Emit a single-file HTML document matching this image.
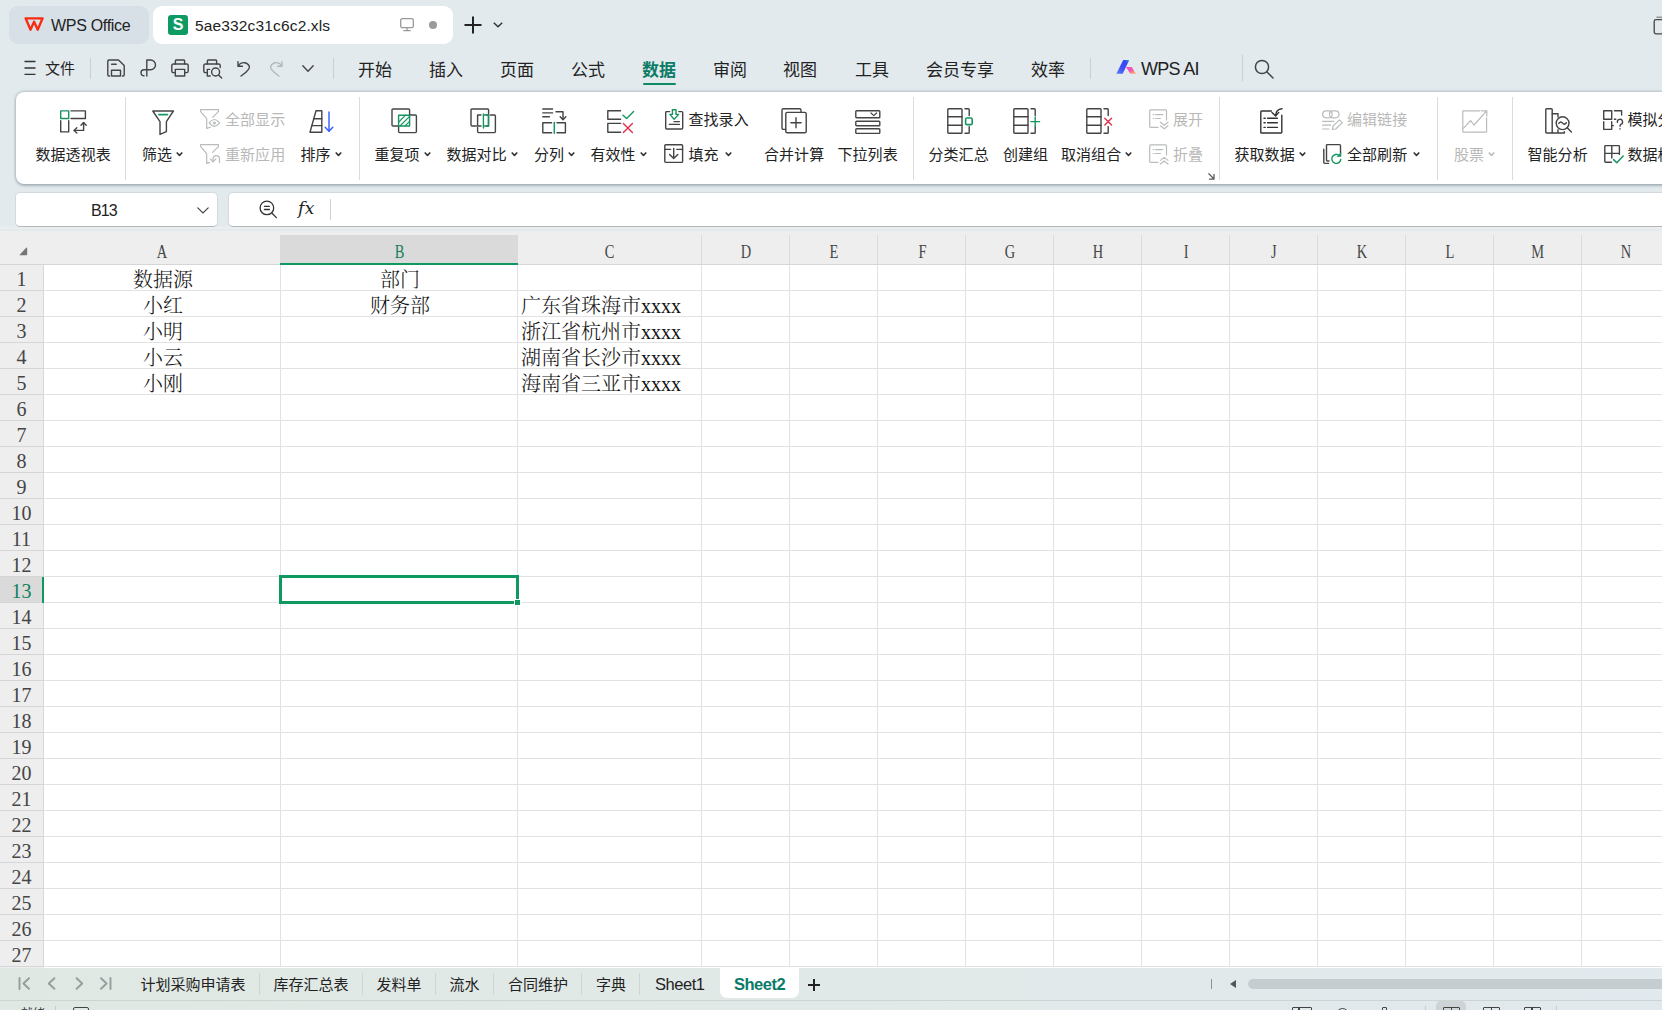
<!DOCTYPE html>
<html lang="zh-CN"><head><meta charset="utf-8"><title>5ae332c31c6c2.xls - WPS Office</title>
<style>
*{box-sizing:border-box;margin:0;padding:0}
html,body{width:1662px;height:1010px;overflow:hidden}
body{position:relative;background:#e3eaee;font-family:"Liberation Sans","Noto Sans CJK SC",sans-serif;color:#222;}
.abs{position:absolute}
.t{position:absolute;white-space:nowrap;line-height:1}
svg{position:absolute;overflow:visible}
.ic{fill:none;stroke:#444;stroke-width:1.4;stroke-linecap:round;stroke-linejoin:round}
.menu{font-size:17px;color:#222;top:61.5px;height:18px;line-height:18px}
.rl{font-size:15px;color:#222;letter-spacing:0.05px;line-height:16px;height:16px}
.dis{color:#b8b8b8}
.vsep{position:absolute;width:1px;background:#d9dcde}
.gl{position:absolute;background:#e2e2e2}
.hl{position:absolute;background:#d6d6d6}
.ch{position:absolute;top:242px;padding-left:2px;height:20px;line-height:20px;font-family:"Liberation Serif","Noto Serif CJK SC",serif;font-size:19.5px;color:#464646;text-align:center}
.ch span{display:inline-block;transform:scaleX(.74)}
.rh{position:absolute;left:0;width:43px;text-align:center;font-family:"Liberation Serif","Noto Serif CJK SC",serif;font-size:20px;color:#454545;height:26px;line-height:26px;padding-top:1px}
.cell{position:absolute;font-family:"Liberation Serif","Noto Serif CJK SC",serif;font-size:20px;font-weight:300;color:#111;height:26px;line-height:26px;white-space:nowrap}
.st{position:absolute;top:976px;height:18px;line-height:18px;font-size:15px;color:#222;white-space:nowrap}
</style></head>
<body>
<!-- title bar -->
<div class="abs" style="left:9px;top:6px;width:140px;height:38px;border-radius:9px;background:#d7e0e6"></div>
<svg style="left:24px;top:16px" width="21" height="17" viewBox="0 0 21 17"><path d="M1.600 2.300H18.600L13.700 13.800L10.100 5.600L6.500 13.800Z" fill="none" stroke="#fa2a10" stroke-width="2.300" stroke-linejoin="round"/></svg>
<div class="t" style="left:51px;top:16.5px;font-size:16px;line-height:17px;color:#222;letter-spacing:-0.3px">WPS Office</div>
<div class="abs" style="left:153px;top:6px;width:300px;height:38px;border-radius:9px;background:#fff"></div>
<div class="abs" style="left:168px;top:15px;width:20px;height:20px;border-radius:3px;background:#0e9b63"></div>
<div class="t" style="left:168px;top:16px;width:20px;text-align:center;font-size:16px;font-weight:bold;color:#fff;line-height:18px">S</div>
<div class="t" style="left:195px;top:17px;font-size:15.5px;line-height:17px;color:#222;letter-spacing:0.15px">5ae332c31c6c2.xls</div>
<svg style="left:400px;top:18px" width="14" height="14" viewBox="0 0 14 14"><rect x="0.7" y="0.7" width="12.6" height="9" rx="1.6" fill="none" stroke="#999" stroke-width="1.3"/><path d="M7 9.8V12.4M3.4 12.6H10.6" stroke="#999" stroke-width="1.3" fill="none"/></svg>
<div class="abs" style="left:429px;top:21px;width:8px;height:8px;border-radius:4px;background:#9a9a9a"></div>
<svg style="left:464px;top:16px" width="18" height="18" viewBox="0 0 18 18"><path d="M9 0.5V17.5M0.5 9H17.5" stroke="#222" stroke-width="2" fill="none"/></svg>
<svg style="left:493px;top:22px" width="10" height="6" viewBox="0 0 10 6"><path d="M0.8 0.8L5 4.8L9.2 0.8" stroke="#333" stroke-width="1.5" fill="none"/></svg>
<svg style="left:1652.500px;top:15.500px" width="14" height="20" viewBox="0 0 14 20"><path d="M3.400 1.200H14" stroke="#777" stroke-width="1.100" fill="none"/><path d="M14 3.700H3A1.800 1.800 0 0 0 1.200 5.500V16A1.800 1.800 0 0 0 3 17.800H14" stroke="#444" stroke-width="1.300" fill="none"/></svg>
<!-- menu row -->
<svg style="left:24px;top:60px" width="12" height="16" viewBox="0 0 12 16"><path d="M0.5 1.5H11.5M0.5 8H11.5M0.5 14.3H11.5" stroke="#333" stroke-width="1.3" fill="none"/></svg>
<div class="t" style="left:45px;top:60px;font-size:15px;line-height:17px;color:#222">文件</div>
<div class="vsep" style="left:90px;top:58px;height:21px;background:#c9cfd3"></div>
<svg style="left:107px;top:59px" width="18" height="18" viewBox="0 0 18 18"><g class="ic"><path d="M2.6 17H2A1.3 1.3 0 0 1 .8 15.7V2.3A1.3 1.3 0 0 1 2 1H11.5L17.2 6.6V15.7A1.3 1.3 0 0 1 16 17H15.4"/><path d="M4.5 17V11.2H13.5V17Z"/><path d="M4.6 5.3H9.2"/></g></svg>
<svg style="left:140px;top:59px" width="17" height="18" viewBox="0 0 17 18"><g class="ic"><path d="M6.8 17V1H10.6A4.9 4.9 0 0 1 10.6 10.8H4A3 3 0 0 0 1 13.8A3 3 0 0 0 4 16.800"/></g></svg>
<svg style="left:171px;top:59px" width="18" height="18" viewBox="0 0 18 18"><g class="ic"><path d="M4.4 5V1.8A.8.8 0 0 1 5.2 1H12.8A.8.8 0 0 1 13.6 1.8V5"/><path d="M4.2 13.6H2.4A1.6 1.6 0 0 1 .8 12V6.6A1.6 1.6 0 0 1 2.4 5H15.6A1.6 1.6 0 0 1 17.2 6.6V12A1.6 1.6 0 0 1 15.6 13.6H13.8"/><path d="M4.3 10.4H13.7V17H4.3Z"/></g></svg>
<svg style="left:203px;top:59px" width="20" height="20" viewBox="0 0 20 20"><g class="ic"><path d="M4.4 5V1.8A.8.8 0 0 1 5.2 1H12.8A.8.8 0 0 1 13.6 1.8V5"/><path d="M3.6 13.6H2.4A1.6 1.6 0 0 1 .8 12V6.6A1.6 1.6 0 0 1 2.4 5H15.6A1.6 1.6 0 0 1 17.2 6.6V8.6"/><path d="M6.6 10.4H4.3V17H7.2"/><circle cx="12.6" cy="13" r="4"/><path d="M15.6 16L18.6 19"/></g></svg>
<svg style="left:237px;top:60px" width="14" height="17" viewBox="0 0 14 17"><g class="ic"><path d="M1 1.6V6.2H5.4"/><path d="M1.4 6A6 6 0 0 1 12.4 6.6C13 10 8 13 4 16"/></g></svg>
<svg style="left:269px;top:60px" width="14" height="17" viewBox="0 0 14 17"><g class="ic" style="stroke:#b4b8bb"><path d="M13 1.6V6.2H8.6"/><path d="M12.6 6A6 6 0 0 0 1.6 6.6C1 10 6 13 10 16"/></g></svg>
<svg style="left:302px;top:65px" width="12" height="8" viewBox="0 0 12 8"><path d="M0.8 0.8L6 6.2L11.2 0.8" class="ic"/></svg>
<div class="vsep" style="left:333px;top:58px;height:21px;background:#c9cfd3"></div>
<div class="t menu" style="left:358px">开始</div>
<div class="t menu" style="left:429px">插入</div>
<div class="t menu" style="left:500px">页面</div>
<div class="t menu" style="left:571px">公式</div>
<div class="t menu" style="left:642px;color:#0c7c66;font-weight:bold">数据</div>
<div class="abs" style="left:643px;top:82.5px;width:33px;height:2px;background:#0f8a62;border-radius:1px"></div>
<div class="t menu" style="left:713px">审阅</div>
<div class="t menu" style="left:783px">视图</div>
<div class="t menu" style="left:855px">工具</div>
<div class="t menu" style="left:926px">会员专享</div>
<div class="t menu" style="left:1031px">效率</div>
<div class="vsep" style="left:1090px;top:58px;height:21px;background:#c9cfd3"></div>
<svg style="left:1116px;top:60px" width="20" height="14" viewBox="0 0 20 14"><defs><linearGradient id="ai1" x1="0" y1="1" x2="1" y2="0"><stop offset="0" stop-color="#5a86f8"/><stop offset="0.45" stop-color="#3d4cf4"/><stop offset="0.8" stop-color="#3a48f2"/><stop offset="1" stop-color="#1fa6c8"/></linearGradient><linearGradient id="ai2" x1="0" y1="0" x2="0.6" y2="1"><stop offset="0" stop-color="#f04cc4"/><stop offset="0.6" stop-color="#f458b8"/><stop offset="1" stop-color="#ffa066"/></linearGradient></defs><path d="M7.200 0H12.600Q13.200 0.100 12.900 0.800L6.700 13.800H0.300Z" fill="url(#ai1)"/><path d="M10 6.900H15.800L19.800 13.800H14.200Z" fill="url(#ai2)"/></svg>
<div class="t menu" style="left:1141px;top:60px;font-size:18px;letter-spacing:-0.700px">WPS AI</div>
<div class="vsep" style="left:1242px;top:55px;height:26px;background:#c9cfd3"></div>
<svg style="left:1254px;top:59px" width="20" height="20" viewBox="0 0 20 20"><g class="ic" style="stroke-width:1.5"><circle cx="8" cy="8" r="6.6"/><path d="M13 13L19 19"/></g></svg>
<!-- ribbon -->
<div class="abs" style="left:15.5px;top:91.5px;width:1700px;height:92.5px;border-radius:8px;background:#fff;box-shadow:0 0 3px rgba(80,100,110,.5),0 1.5px 3px rgba(80,100,110,.3)"></div>
<div class="vsep" style="left:125px;top:97px;height:83px"></div>
<div class="vsep" style="left:359px;top:97px;height:83px"></div>
<div class="vsep" style="left:913px;top:97px;height:83px"></div>
<div class="vsep" style="left:1219px;top:97px;height:83px"></div>
<div class="vsep" style="left:1437px;top:97px;height:83px"></div>
<div class="vsep" style="left:1512px;top:97px;height:83px"></div>
<svg style="left:60px;top:109.5px" width="28" height="24" viewBox="0 0 28 24"><g class="ic" style=""><rect x="0.7" y="0.9" width="8" height="7.6" stroke="#17955f"/><path d="M11 0.9H25.4V8.5H11"/><path d="M0.7 10.8V21.9H8.7V10.8"/><path d="M23.6 13V20.4H14.4"/><path d="M21 15.2L23.6 12.4L26.2 15.2"/><path d="M16.8 17.8L14 20.4L16.8 23"/></g></svg>
<div class="t rl " style="left:35.5px;top:147px">数据透视表</div>
<svg style="left:152px;top:109.5px" width="23" height="26" viewBox="0 0 23 26"><g class="ic" style=""><path d="M0.8 1H21.4L14.4 11.6V21.6L8 24.4V11.6Z"/><path d="M6.8 4.6H15.6" stroke="#17955f" stroke-width="1.6"/></g></svg>
<div class="t rl " style="left:142px;top:147px">筛选</div>
<svg style="left:176px;top:152.4px" width="7" height="5" viewBox="0 0 7 5"><path d="M1.200 1L3.500 3.300L5.800 1" fill="none" stroke="#333" stroke-width="1.650" stroke-linecap="round" stroke-linejoin="round"/></svg>
<svg style="left:200px;top:108.8px" width="21" height="21" viewBox="0 0 21 21"><g class="ic" style="stroke:#b9bcbc;stroke-width:1.200"><path d="M0.600 2.600V0.600H18.400V2.600M0.600 2.600L6.700 9.600V19.400L10.400 18.200M18.400 2.600L12.600 8.400"/><path d="M9.200 13.900Q14.400 7.100 19.600 13.900Q14.400 20.700 9.200 13.900Z"/><circle cx="14.400" cy="14" r="0.900" fill="#bdbdbd"/></g></svg>
<div class="t rl dis" style="left:225px;top:112px">全部显示</div>
<svg style="left:200px;top:144.2px" width="21" height="21" viewBox="0 0 21 21"><g class="ic" style="stroke:#b9bcbc;stroke-width:1.200"><path d="M0.600 2.600V0.600H18.400V2.600M0.600 2.600L6.700 9.600V19.400L9.600 18.400M18.400 2.600L12.600 8.400"/><path d="M19.500 18.400V14.800A3.200 3.200 0 0 0 13.100 14.800V17.400"/><path d="M10.500 15L13.100 17.800L15.800 15"/></g></svg>
<div class="t rl dis" style="left:225px;top:147px">重新应用</div>
<svg style="left:309px;top:109.5px" width="26" height="24" viewBox="0 0 26 24"><g class="ic" style=""><path d="M7 0.8H12.8V22.2H1Z"/><path d="M4.6 8.8H12.8M2.8 15.6H12.8"/><path d="M20 2V21" stroke="#2f5bff"/><path d="M16.2 17.2L20 21.2L23.8 17.2" stroke="#2f5bff"/></g></svg>
<div class="t rl " style="left:300.5px;top:147px">排序</div>
<svg style="left:335px;top:152.4px" width="7" height="5" viewBox="0 0 7 5"><path d="M1.200 1L3.500 3.300L5.800 1" fill="none" stroke="#333" stroke-width="1.650" stroke-linecap="round" stroke-linejoin="round"/></svg>
<svg style="left:391px;top:108px" width="27" height="27" viewBox="0 0 27 27"><g class="ic" style=""><path d="M7.4 18H2A1 1 0 0 1 1 17V2A1 1 0 0 1 2 1H17.6A1 1 0 0 1 18.6 2V7"/><path d="M19.2 7H24.4A1 1 0 0 1 25.4 8V23.6A1 1 0 0 1 24.4 24.6H8.6A1 1 0 0 1 7.6 23.6V18.4"/><g stroke="#17955f"><rect x="7.6" y="7.2" width="11" height="10.8"/><path d="M7.8 14L14.6 7.2M9 18L18.6 8.4M14 18L18.6 13.4" stroke-width="1.1"/></g></g></svg>
<div class="t rl " style="left:374.5px;top:147px">重复项</div>
<svg style="left:424px;top:152.4px" width="7" height="5" viewBox="0 0 7 5"><path d="M1.200 1L3.500 3.300L5.800 1" fill="none" stroke="#333" stroke-width="1.650" stroke-linecap="round" stroke-linejoin="round"/></svg>
<svg style="left:470px;top:108px" width="27" height="27" viewBox="0 0 27 27"><g class="ic" style=""><path d="M6.4 18H2A1 1 0 0 1 1 17V2A1 1 0 0 1 2 1H17.6A1 1 0 0 1 18.6 2V6"/><path d="M20.2 7H24.4A1 1 0 0 1 25.4 8V23.6A1 1 0 0 1 24.4 24.6H8.6A1 1 0 0 1 7.6 23.6V19.4"/><path d="M11 7H7.6V18H11M16.4 7H18.6V18H16.4" /><path d="M13.4 6V20M13.4 7H18.4V18H13.4" stroke="#17955f"/></g></svg>
<div class="t rl " style="left:446.5px;top:147px">数据对比</div>
<svg style="left:511px;top:152.4px" width="7" height="5" viewBox="0 0 7 5"><path d="M1.200 1L3.500 3.300L5.800 1" fill="none" stroke="#333" stroke-width="1.650" stroke-linecap="round" stroke-linejoin="round"/></svg>
<svg style="left:542px;top:108px" width="25" height="26" viewBox="0 0 25 26"><g class="ic" style=""><path d="M0.8 1H10.6M0.8 4.9H10.6M0.8 8.7H7.4"/><path d="M14 3.7H21V11.4"/><path d="M18.2 8.8L21 11.8L23.8 8.8"/><path d="M9.6 14.8H0.8V24.8H9.6M15 14.8H23.4V24.8H15"/><path d="M12.3 14.4V25.2" stroke="#17955f" stroke-width="1.5"/></g></svg>
<div class="t rl " style="left:534px;top:147px">分列</div>
<svg style="left:568px;top:152.4px" width="7" height="5" viewBox="0 0 7 5"><path d="M1.200 1L3.500 3.300L5.800 1" fill="none" stroke="#333" stroke-width="1.650" stroke-linecap="round" stroke-linejoin="round"/></svg>
<svg style="left:607px;top:109.5px" width="28" height="24" viewBox="0 0 28 24"><g class="ic" style=""><path d="M13.6 0.8H0.8V9.2H13.6M13.6 13.4H0.8V22.2H13.6"/><path d="M16 5.2L19.6 8.6L26.6 1.6" stroke="#17955f"/><path d="M16.4 13.4L25.4 22.4M25.4 13.4L16.4 22.4" stroke="#e0324b"/></g></svg>
<div class="t rl " style="left:590.5px;top:147px">有效性</div>
<svg style="left:640px;top:152.4px" width="7" height="5" viewBox="0 0 7 5"><path d="M1.200 1L3.500 3.300L5.800 1" fill="none" stroke="#333" stroke-width="1.650" stroke-linecap="round" stroke-linejoin="round"/></svg>
<svg style="left:664.5px;top:108.5px" width="19" height="21" viewBox="0 0 19 21"><g class="ic" style=""><path d="M4.6 2.6H1.6A0.9 0.9 0 0 0 .7 3.5V19.1A0.9 0.9 0 0 0 1.6 20H16.8A0.9 0.9 0 0 0 17.7 19.1V3.5A0.9 0.9 0 0 0 16.8 2.6H13.8"/><path d="M4.4 15.4H14.4M9 12.6H14.4"/><path d="M7.4 0.7H11V5.4H13.6L9.2 10.2L4.8 5.4H7.4Z" stroke="#17955f"/></g></svg>
<div class="t rl " style="left:688.5px;top:112px">查找录入</div>
<svg style="left:664px;top:144px" width="20" height="20" viewBox="0 0 20 20"><g class="ic" style=""><rect x="0.8" y="0.8" width="17.8" height="17.6" rx="1"/><path d="M0.8 5.4H6.6M12.8 5.4H18.6"/><path d="M9.7 4.4V14.4M5.6 10.6L9.7 14.6L13.8 10.6"/></g></svg>
<div class="t rl " style="left:688.5px;top:147px">填充</div>
<svg style="left:724.5px;top:152.4px" width="7" height="5" viewBox="0 0 7 5"><path d="M1.200 1L3.500 3.300L5.800 1" fill="none" stroke="#333" stroke-width="1.650" stroke-linecap="round" stroke-linejoin="round"/></svg>
<svg style="left:781px;top:108px" width="27" height="26" viewBox="0 0 27 26"><g class="ic" style=""><path d="M4.6 21.4H2.4A1.4 1.4 0 0 1 1 20V2.2A1.4 1.4 0 0 1 2.4 .8H18.6A1.4 1.4 0 0 1 20 2.2V4"/><rect x="4.8" y="4.4" width="20.4" height="20.4" rx="1.4"/><path d="M15 9.6V19.8M9.9 14.7H20.1"/></g></svg>
<div class="t rl " style="left:764px;top:147px">合并计算</div>
<svg style="left:855px;top:109.5px" width="27" height="25" viewBox="0 0 27 25"><g class="ic" style=""><rect x="0.8" y="0.8" width="24" height="7" rx="0.8"/><rect x="0.8" y="11.2" width="24" height="4.6" rx="0.8"/><rect x="0.8" y="18.8" width="24" height="4.6" rx="0.8"/><path d="M16 3L18.8 5.6L21.6 3" stroke-width="1.2"/></g></svg>
<div class="t rl " style="left:837.5px;top:147px">下拉列表</div>
<svg style="left:947.3px;top:108px" width="27" height="26" viewBox="0 0 27 26"><g class="ic" style=""><rect x="0.8" y="0.8" width="14.2" height="24.4" rx="0.8"/><path d="M0.8 8.8H15M0.8 17.2H15"/><path d="M18 0.8H21.4A0.8 0.8 0 0 1 22.2 1.6V7.6M22.2 18.6V24.4A0.8 0.8 0 0 1 21.4 25.2H18"/><rect x="18.6" y="10" width="6.6" height="6.6" rx="1.4" stroke="#17955f" stroke-width="1.6"/></g></svg>
<div class="t rl " style="left:928.5px;top:147px">分类汇总</div>
<svg style="left:1013.3px;top:108px" width="27" height="26" viewBox="0 0 27 26"><g class="ic" style=""><rect x="0.8" y="0.8" width="14.2" height="24.4" rx="0.8"/><path d="M0.8 8.8H15M0.8 17.2H15"/><path d="M18 0.8H21.4A0.8 0.8 0 0 1 22.2 1.6V7.6M22.2 18.6V24.4A0.8 0.8 0 0 1 21.4 25.2H18"/><path d="M22.2 9V18.2M17.8 13.6H26.6" stroke="#17955f"/></g></svg>
<div class="t rl " style="left:1003px;top:147px">创建组</div>
<svg style="left:1085.5px;top:108px" width="27" height="26" viewBox="0 0 27 26"><g class="ic" style=""><rect x="0.8" y="0.8" width="14.2" height="24.4" rx="0.8"/><path d="M0.8 8.8H15M0.8 17.2H15"/><path d="M18 0.8H21.4A0.8 0.8 0 0 1 22.2 1.6V7.6M22.2 18.6V24.4A0.8 0.8 0 0 1 21.4 25.2H18"/><path d="M18.8 10.2L25.6 17M25.6 10.2L18.8 17" stroke="#e0324b"/></g></svg>
<div class="t rl " style="left:1061px;top:147px">取消组合</div>
<svg style="left:1124.7px;top:152.4px" width="7" height="5" viewBox="0 0 7 5"><path d="M1.200 1L3.500 3.300L5.800 1" fill="none" stroke="#333" stroke-width="1.650" stroke-linecap="round" stroke-linejoin="round"/></svg>
<svg style="left:1149px;top:109px" width="20" height="21" viewBox="0 0 20 21"><g class="ic" style="stroke:#b9bcbc;stroke-width:1.2"><path d="M9 18.4H1.6A.9.9 0 0 1 .7 17.5V1.7A.9.9 0 0 1 1.600 .8H16.6A.9.9 0 0 1 17.500 1.700V11"/><path d="M4.200 5.600H4.800M6.600 5.600H13.800M4.200 9.500H4.800M6.600 9.500H11.400"/><path d="M11.400 13.200L15.200 16.200L19 13.200M11.400 16.800L15.200 19.800L19 16.800"/></g></svg>
<div class="t rl dis" style="left:1173px;top:112px">展开</div>
<svg style="left:1149px;top:144px" width="20" height="21" viewBox="0 0 20 21"><g class="ic" style="stroke:#b9bcbc;stroke-width:1.2"><path d="M9 18.4H1.6A.9.9 0 0 1 .7 17.5V1.7A.9.9 0 0 1 1.600 .8H16.6A.9.9 0 0 1 17.500 1.700V11"/><path d="M4.200 5.600H4.800M6.600 5.600H13.800M4.200 9.500H4.800M6.600 9.500H11.400"/><path d="M11.400 16.400L15.200 13.400L19 16.400M11.400 20L15.200 17L19 20"/></g></svg>
<div class="t rl dis" style="left:1173px;top:147px">折叠</div>
<svg style="left:1208px;top:173px" width="7" height="7" viewBox="0 0 7 7"><g class="ic" style="stroke:#5a5a5a;stroke-width:1.250"><path d="M0.800 0.800L5.800 5.800M6 1.400V6H1.400"/></g></svg>
<svg style="left:1259.5px;top:108px" width="24" height="26" viewBox="0 0 24 26"><g class="ic" style="stroke:#333"><path d="M11.400 3H1.600A.8.8 0 0 0 .8 3.800V24.200A.8.800 0 0 0 1.600 25H21A.8.8 0 0 0 21.800 24.200V7.200"/><path d="M4 10.200H5.200M7.600 10.200H17.400M4 14.800H5.200M7.600 14.800H17.400M4 19.400H5.200M7.600 19.400H17.400"/><path d="M22 .8C18 1.200 15.800 3.600 15.600 7.600M12 4.600L15.600 8L18.800 4.400"/></g></svg>
<div class="t rl " style="left:1234.5px;top:147px">获取数据</div>
<svg style="left:1298.8px;top:152.4px" width="7" height="5" viewBox="0 0 7 5"><path d="M1.200 1L3.500 3.300L5.800 1" fill="none" stroke="#333" stroke-width="1.650" stroke-linecap="round" stroke-linejoin="round"/></svg>
<svg style="left:1321.5px;top:109.5px" width="21" height="21" viewBox="0 0 21 21"><g class="ic" style="stroke:#b9bcbc;stroke-width:1.200"><rect x="0.600" y="0.800" width="9.600" height="7" rx="3.500"/><rect x="7.400" y="0.800" width="9.600" height="7" rx="3.500"/><path d="M.600 11.300H12M.600 15.200H8.600M.600 19H7"/><path d="M10.400 19.400L11 16.200L17.400 9.800L20.200 12.600L13.800 19Z"/></g></svg>
<div class="t rl dis" style="left:1347px;top:112px">编辑链接</div>
<svg style="left:1322.5px;top:144px" width="20" height="21" viewBox="0 0 20 21"><g class="ic" style=""><path d="M6 17H4.400A.9.9 0 0 1 3.500 16.100V1.500A.9.9 0 0 1 4.400 .6H16.600A.9.9 0 0 1 17.500 1.500V9"/><path d="M.8 5.200V18.400A1 1 0 0 0 1.800 19.400H5.600" /><path d="M17.800 15.400A4.500 4.500 0 1 1 16.200 11.400" stroke="#17955f" stroke-width="1.400"/><path d="M18 8.800V12.600H14.200Z" fill="#17955f" stroke="#17955f" stroke-width="0.600"/></g></svg>
<div class="t rl " style="left:1347px;top:147px">全部刷新</div>
<svg style="left:1412.6px;top:152.4px" width="7" height="5" viewBox="0 0 7 5"><path d="M1.200 1L3.500 3.300L5.800 1" fill="none" stroke="#333" stroke-width="1.650" stroke-linecap="round" stroke-linejoin="round"/></svg>
<svg style="left:1462px;top:109.5px" width="27" height="24" viewBox="0 0 27 24"><g class="ic" style="stroke:#b9bcbc;stroke-width:1.2"><path d="M18 .8H1.400A.6.600 0 0 0 .8 1.400V21.600A.6.600 0 0 0 1.400 22.200H24A.6.600 0 0 0 24.600 21.600V7.800"/><path d="M1.600 18.200L8.600 10.600L12 15L24.400 1.200M19.600 .8H24.800V6"/></g></svg>
<div class="t rl dis" style="left:1454px;top:147px">股票</div>
<svg style="left:1488px;top:152.4px" width="7" height="5" viewBox="0 0 7 5"><path d="M1.200 1L3.500 3.300L5.800 1" fill="none" stroke="#bdbdbd" stroke-width="1.650" stroke-linecap="round" stroke-linejoin="round"/></svg>
<svg style="left:1545px;top:108px" width="28" height="26" viewBox="0 0 28 26"><g class="ic" style=""><rect x="0.8" y="0.8" width="6.400" height="24.200" rx="0.8"/><path d="M7.200 5.800H13V9M13 21.800V25H7.200M13 25H19.400V23.600"/><circle cx="17.600" cy="15.200" r="6.400"/><path d="M22.200 19.800L26.400 24"/><path d="M13.800 15.400C15.200 13.400 16.400 13.600 17.600 15.200C18.800 16.800 20 16.600 21.400 14.800"/></g></svg>
<div class="t rl " style="left:1527.5px;top:147px">智能分析</div>
<svg style="left:1603px;top:109.5px" width="21" height="21" viewBox="0 0 21 21"><g class="ic" style=""><rect x="0.7" y="0.8" width="8" height="8.400"/><path d="M.7 11.800V19.400H8.700V11.800M11.400 .8H18.600V5M11.400 9.200H12.800M8.700 15.600H10.400"/><path d="M14.400 12.400A2.600 2.600 0 1 1 17.800 14.400C17 14.800 17 15.400 17 16.200M17 18.800V19"/></g></svg>
<div class="t rl " style="left:1627.5px;top:112px">模拟分析</div>
<svg style="left:1604px;top:144.5px" width="21" height="20" viewBox="0 0 21 20"><g class="ic" style=""><path d="M7.400 17.200H1.600A.8.800 0 0 1 .8 16.400V1.400A.8.800 0 0 1 1.600 .6H14.600A.8.800 0 0 1 15.400 1.400V9.400M.8 8.400H15.400M7.800 .6V13"/><path d="M9.600 14.600L12.800 17.800L19.200 11" stroke="#17955f" stroke-width="1.5"/></g></svg>
<div class="t rl " style="left:1627.5px;top:147px">数据校对</div>
<!-- formula bar -->
<div class="abs" style="left:0;top:231px;width:1662px;height:737px;background:#eeeeee"></div>
<div class="abs" style="left:0;top:226px;width:1662px;height:3px;background:linear-gradient(#e5ecf0,#eeeeee)"></div>
<div class="abs" style="left:15px;top:192px;width:203px;height:35px;border-radius:5px;background:#fff;border:1px solid #d2dadf;border-bottom-color:#b3b7b8"></div>
<div class="abs" style="left:228px;top:192px;width:1500px;height:35px;border-radius:5px;background:#fff;border:1px solid #d2dadf;border-bottom-color:#b3b7b8"></div>
<div class="t" style="left:91px;top:202px;font-size:16px;line-height:18px;color:#222;letter-spacing:-0.900px">B13</div>
<svg style="left:197px;top:206.500px" width="12" height="7" viewBox="0 0 12 7"><path d="M0.8 0.800L6 6L11.200 0.800" fill="none" stroke="#444" stroke-width="1.200" stroke-linecap="round"/></svg>
<svg style="left:259px;top:200px" width="19" height="19" viewBox="0 0 19 19"><g class="ic" style="stroke:#333;stroke-width:1.300"><circle cx="7.900" cy="7.900" r="6.800"/><path d="M13 13.200L17.400 17.600M5.400 6.300H10.400M5.400 9.500H10.400"/></g></svg>
<div class="t" style="left:298px;top:195.500px;line-height:24px;color:#222;font-family:'DejaVu Serif','Liberation Serif',serif;font-style:italic;font-size:17px;letter-spacing:0.500px">fx</div>
<div class="vsep" style="left:330px;top:199px;height:21px;background:#d0d0d0"></div>
<!-- grid -->
<div class="abs" style="left:44px;top:265px;width:1618px;height:703px;background:#fff"></div>
<div class="abs" style="left:280px;top:235px;width:238px;height:28px;background:#dadada"></div>
<div class="abs" style="left:0;top:577px;width:42px;height:25px;background:#dadada"></div>
<div class="hl" style="left:0;top:264px;width:1662px;height:1px"></div>
<div class="hl" style="left:43px;top:264px;width:1px;height:703px"></div>
<div class="hl" style="left:701px;top:235px;width:1px;height:29px;background:#dadada"></div>
<div class="hl" style="left:789px;top:235px;width:1px;height:29px;background:#dadada"></div>
<div class="hl" style="left:877px;top:235px;width:1px;height:29px;background:#dadada"></div>
<div class="hl" style="left:965px;top:235px;width:1px;height:29px;background:#dadada"></div>
<div class="hl" style="left:1053px;top:235px;width:1px;height:29px;background:#dadada"></div>
<div class="hl" style="left:1141px;top:235px;width:1px;height:29px;background:#dadada"></div>
<div class="hl" style="left:1229px;top:235px;width:1px;height:29px;background:#dadada"></div>
<div class="hl" style="left:1317px;top:235px;width:1px;height:29px;background:#dadada"></div>
<div class="hl" style="left:1405px;top:235px;width:1px;height:29px;background:#dadada"></div>
<div class="hl" style="left:1493px;top:235px;width:1px;height:29px;background:#dadada"></div>
<div class="hl" style="left:1581px;top:235px;width:1px;height:29px;background:#dadada"></div>
<div class="hl" style="left:1669px;top:235px;width:1px;height:29px;background:#dadada"></div>
<div class="gl" style="left:280px;top:265px;width:1px;height:702px"></div>
<div class="gl" style="left:517px;top:265px;width:1px;height:702px"></div>
<div class="gl" style="left:701px;top:265px;width:1px;height:702px"></div>
<div class="gl" style="left:789px;top:265px;width:1px;height:702px"></div>
<div class="gl" style="left:877px;top:265px;width:1px;height:702px"></div>
<div class="gl" style="left:965px;top:265px;width:1px;height:702px"></div>
<div class="gl" style="left:1053px;top:265px;width:1px;height:702px"></div>
<div class="gl" style="left:1141px;top:265px;width:1px;height:702px"></div>
<div class="gl" style="left:1229px;top:265px;width:1px;height:702px"></div>
<div class="gl" style="left:1317px;top:265px;width:1px;height:702px"></div>
<div class="gl" style="left:1405px;top:265px;width:1px;height:702px"></div>
<div class="gl" style="left:1493px;top:265px;width:1px;height:702px"></div>
<div class="gl" style="left:1581px;top:265px;width:1px;height:702px"></div>
<div class="gl" style="left:44px;top:290px;width:1618px;height:1px"></div>
<div class="hl" style="left:0;top:290px;width:43px;height:1px"></div>
<div class="gl" style="left:44px;top:316px;width:1618px;height:1px"></div>
<div class="hl" style="left:0;top:316px;width:43px;height:1px"></div>
<div class="gl" style="left:44px;top:342px;width:1618px;height:1px"></div>
<div class="hl" style="left:0;top:342px;width:43px;height:1px"></div>
<div class="gl" style="left:44px;top:368px;width:1618px;height:1px"></div>
<div class="hl" style="left:0;top:368px;width:43px;height:1px"></div>
<div class="gl" style="left:44px;top:394px;width:1618px;height:1px"></div>
<div class="hl" style="left:0;top:394px;width:43px;height:1px"></div>
<div class="gl" style="left:44px;top:420px;width:1618px;height:1px"></div>
<div class="hl" style="left:0;top:420px;width:43px;height:1px"></div>
<div class="gl" style="left:44px;top:446px;width:1618px;height:1px"></div>
<div class="hl" style="left:0;top:446px;width:43px;height:1px"></div>
<div class="gl" style="left:44px;top:472px;width:1618px;height:1px"></div>
<div class="hl" style="left:0;top:472px;width:43px;height:1px"></div>
<div class="gl" style="left:44px;top:498px;width:1618px;height:1px"></div>
<div class="hl" style="left:0;top:498px;width:43px;height:1px"></div>
<div class="gl" style="left:44px;top:524px;width:1618px;height:1px"></div>
<div class="hl" style="left:0;top:524px;width:43px;height:1px"></div>
<div class="gl" style="left:44px;top:550px;width:1618px;height:1px"></div>
<div class="hl" style="left:0;top:550px;width:43px;height:1px"></div>
<div class="gl" style="left:44px;top:576px;width:1618px;height:1px"></div>
<div class="hl" style="left:0;top:576px;width:43px;height:1px"></div>
<div class="gl" style="left:44px;top:602px;width:1618px;height:1px"></div>
<div class="hl" style="left:0;top:602px;width:43px;height:1px"></div>
<div class="gl" style="left:44px;top:628px;width:1618px;height:1px"></div>
<div class="hl" style="left:0;top:628px;width:43px;height:1px"></div>
<div class="gl" style="left:44px;top:654px;width:1618px;height:1px"></div>
<div class="hl" style="left:0;top:654px;width:43px;height:1px"></div>
<div class="gl" style="left:44px;top:680px;width:1618px;height:1px"></div>
<div class="hl" style="left:0;top:680px;width:43px;height:1px"></div>
<div class="gl" style="left:44px;top:706px;width:1618px;height:1px"></div>
<div class="hl" style="left:0;top:706px;width:43px;height:1px"></div>
<div class="gl" style="left:44px;top:732px;width:1618px;height:1px"></div>
<div class="hl" style="left:0;top:732px;width:43px;height:1px"></div>
<div class="gl" style="left:44px;top:758px;width:1618px;height:1px"></div>
<div class="hl" style="left:0;top:758px;width:43px;height:1px"></div>
<div class="gl" style="left:44px;top:784px;width:1618px;height:1px"></div>
<div class="hl" style="left:0;top:784px;width:43px;height:1px"></div>
<div class="gl" style="left:44px;top:810px;width:1618px;height:1px"></div>
<div class="hl" style="left:0;top:810px;width:43px;height:1px"></div>
<div class="gl" style="left:44px;top:836px;width:1618px;height:1px"></div>
<div class="hl" style="left:0;top:836px;width:43px;height:1px"></div>
<div class="gl" style="left:44px;top:862px;width:1618px;height:1px"></div>
<div class="hl" style="left:0;top:862px;width:43px;height:1px"></div>
<div class="gl" style="left:44px;top:888px;width:1618px;height:1px"></div>
<div class="hl" style="left:0;top:888px;width:43px;height:1px"></div>
<div class="gl" style="left:44px;top:914px;width:1618px;height:1px"></div>
<div class="hl" style="left:0;top:914px;width:43px;height:1px"></div>
<div class="gl" style="left:44px;top:940px;width:1618px;height:1px"></div>
<div class="hl" style="left:0;top:940px;width:43px;height:1px"></div>
<div class="gl" style="left:44px;top:966px;width:1618px;height:1px"></div>
<div class="hl" style="left:0;top:966px;width:43px;height:1px"></div>
<div class="abs" style="left:280px;top:263px;width:238px;height:2px;background:#0f9960"></div>
<div class="abs" style="left:42px;top:577px;width:2px;height:26px;background:#0f9960"></div>
<svg style="left:19px;top:246.500px" width="9" height="9" viewBox="0 0 9 9"><path d="M7.400 0.600Q8.200 0.400 8.200 1.400V7.400Q8.200 8.200 7.400 8.200H1.200Q0.200 8.200 0.900 7.400Z" fill="#767676"/></svg>
<div class="ch" style="left:43px;width:237px"><span>A</span></div>
<div class="ch" style="left:280px;width:237px;color:#12805c"><span>B</span></div>
<div class="ch" style="left:517px;width:184px"><span>C</span></div>
<div class="ch" style="left:701px;width:88px"><span>D</span></div>
<div class="ch" style="left:789px;width:88px"><span>E</span></div>
<div class="ch" style="left:877px;width:88px"><span>F</span></div>
<div class="ch" style="left:965px;width:88px"><span>G</span></div>
<div class="ch" style="left:1053px;width:88px"><span>H</span></div>
<div class="ch" style="left:1141px;width:88px"><span>I</span></div>
<div class="ch" style="left:1229px;width:88px"><span>J</span></div>
<div class="ch" style="left:1317px;width:88px"><span>K</span></div>
<div class="ch" style="left:1405px;width:88px"><span>L</span></div>
<div class="ch" style="left:1493px;width:88px"><span>M</span></div>
<div class="ch" style="left:1581px;width:88px"><span>N</span></div>
<div class="rh" style="top:265px">1</div>
<div class="rh" style="top:291px">2</div>
<div class="rh" style="top:317px">3</div>
<div class="rh" style="top:343px">4</div>
<div class="rh" style="top:369px">5</div>
<div class="rh" style="top:395px">6</div>
<div class="rh" style="top:421px">7</div>
<div class="rh" style="top:447px">8</div>
<div class="rh" style="top:473px">9</div>
<div class="rh" style="top:499px">10</div>
<div class="rh" style="top:525px">11</div>
<div class="rh" style="top:551px">12</div>
<div class="rh" style="top:577px;color:#12805c">13</div>
<div class="rh" style="top:603px">14</div>
<div class="rh" style="top:629px">15</div>
<div class="rh" style="top:655px">16</div>
<div class="rh" style="top:681px">17</div>
<div class="rh" style="top:707px">18</div>
<div class="rh" style="top:733px">19</div>
<div class="rh" style="top:759px">20</div>
<div class="rh" style="top:785px">21</div>
<div class="rh" style="top:811px">22</div>
<div class="rh" style="top:837px">23</div>
<div class="rh" style="top:863px">24</div>
<div class="rh" style="top:889px">25</div>
<div class="rh" style="top:915px">26</div>
<div class="rh" style="top:941px">27</div>
<div class="cell" style="left:45px;width:236px;top:267px;text-align:center">数据源</div>
<div class="cell" style="left:282px;width:236px;top:267px;text-align:center">部门</div>
<div class="cell" style="left:45px;width:236px;top:293px;text-align:center">小红</div>
<div class="cell" style="left:282px;width:236px;top:293px;text-align:center">财务部</div>
<div class="cell" style="left:521px;top:293px">广东省珠海市xxxx</div>
<div class="cell" style="left:45px;width:236px;top:319px;text-align:center">小明</div>
<div class="cell" style="left:521px;top:319px">浙江省杭州市xxxx</div>
<div class="cell" style="left:45px;width:236px;top:345px;text-align:center">小云</div>
<div class="cell" style="left:521px;top:345px">湖南省长沙市xxxx</div>
<div class="cell" style="left:45px;width:236px;top:371px;text-align:center">小刚</div>
<div class="cell" style="left:521px;top:371px">海南省三亚市xxxx</div>
<div class="abs" style="left:279px;top:575px;width:240px;height:29px;border:3px solid #0f9960"></div>
<div class="abs" style="left:514px;top:599px;width:7px;height:7px;background:#fff"></div>
<div class="abs" style="left:515px;top:600px;width:5px;height:5px;background:#0f9960"></div>
<!-- sheet tabs -->
<div class="abs" style="left:0;top:968px;width:1662px;height:42px;background:linear-gradient(90deg,#e0e8e3 0%,#e1e9e7 40%,#e1e9ee 100%)"></div>
<div class="abs" style="left:0;top:1000px;width:1662px;height:1px;background:#cdd4d4"></div>
<svg style="left:18px;top:977px" width="13" height="13" viewBox="0 0 13 13"><path d="M1.500 1V12M11 1.200L5.400 6.500L11 11.800" stroke="#979c9c" stroke-width="1.9" fill="none" stroke-linecap="round" stroke-linejoin="round"/></svg>
<svg style="left:47px;top:977px" width="9" height="13" viewBox="0 0 9 13"><path d="M7.400 1.200L1.800 6.500L7.400 11.800" stroke="#979c9c" stroke-width="1.9" fill="none" stroke-linecap="round" stroke-linejoin="round"/></svg>
<svg style="left:75px;top:977px" width="9" height="13" viewBox="0 0 9 13"><path d="M1.600 1.200L7.200 6.500L1.600 11.800" stroke="#979c9c" stroke-width="1.9" fill="none" stroke-linecap="round" stroke-linejoin="round"/></svg>
<svg style="left:99px;top:977px" width="13" height="13" viewBox="0 0 13 13"><path d="M11.500 1V12M2 1.200L7.600 6.500L2 11.800" stroke="#979c9c" stroke-width="1.9" fill="none" stroke-linecap="round" stroke-linejoin="round"/></svg>
<div class="st" style="left:140.5px">计划采购申请表</div>
<div class="st" style="left:273.5px">库存汇总表</div>
<div class="st" style="left:376.5px">发料单</div>
<div class="st" style="left:449.5px">流水</div>
<div class="st" style="left:508px">合同维护</div>
<div class="st" style="left:596px">字典</div>
<div class="st" style="left:655px"><span style="font-size:16.500px;letter-spacing:-0.450px;position:relative;top:-1px">Sheet1</span></div>
<div class="vsep" style="left:259px;top:973px;height:22px;background:#cfd6d6"></div>
<div class="vsep" style="left:362px;top:973px;height:22px;background:#cfd6d6"></div>
<div class="vsep" style="left:435px;top:973px;height:22px;background:#cfd6d6"></div>
<div class="vsep" style="left:493px;top:973px;height:22px;background:#cfd6d6"></div>
<div class="vsep" style="left:581px;top:973px;height:22px;background:#cfd6d6"></div>
<div class="vsep" style="left:639px;top:973px;height:22px;background:#cfd6d6"></div>
<div class="abs" style="left:720px;top:968px;width:79px;height:30px;background:#fff;border-radius:0 0 7px 7px"></div>
<div class="st" style="left:734px;top:975px;color:#0a7b68;font-weight:bold;font-size:16.500px;letter-spacing:-0.500px">Sheet2</div>
<svg style="left:807px;top:978px" width="14" height="14" viewBox="0 0 14 14"><path d="M7 1V13M1 7H13" stroke="#222" stroke-width="2" fill="none"/></svg>
<div class="abs" style="left:1211px;top:979px;width:1px;height:10px;background:#8e9494"></div>
<svg style="left:1229px;top:979px" width="8" height="10" viewBox="0 0 8 10"><path d="M7 1V9L1 5Z" fill="#555"/></svg>
<div class="abs" style="left:1248px;top:979px;width:500px;height:10px;border-radius:5px;background:#c6cdd0"></div>
<!-- status bar (cut off) -->
<div class="t" style="left:21px;top:1006.5px;font-size:12px;line-height:14px;color:#333">就绪</div>
<div class="vsep" style="left:55px;top:1006px;height:10px;background:#c5cccc"></div>
<div class="abs" style="left:73px;top:1007px;width:16px;height:14px;border:1.500px solid #444;border-radius:2px"></div>
<div class="abs" style="left:1292px;top:1006.500px;width:20px;height:14px;border:1.500px solid #444;border-radius:1px"></div>
<div class="abs" style="left:1298px;top:1007px;width:1.500px;height:10px;background:#444"></div>
<div class="abs" style="left:1336px;top:1007.500px;width:13px;height:13px;border:1.500px solid #444;border-radius:7px"></div>
<div class="abs" style="left:1382px;top:1006.500px;width:5px;height:10px;border:1.500px solid #444;border-radius:1px"></div>
<div class="vsep" style="left:1425px;top:1006px;height:10px;background:#c5cccc"></div>
<div class="abs" style="left:1436px;top:1001px;width:30px;height:20px;border-radius:5px;background:#cdd3d6"></div>
<div class="abs" style="left:1443px;top:1007px;width:17px;height:14px;border:1.500px solid #444;border-radius:1px"></div>
<div class="abs" style="left:1450.5px;top:1007px;width:1.500px;height:10px;background:#444"></div>
<div class="abs" style="left:1483px;top:1007px;width:17px;height:14px;border:1.500px solid #444;border-radius:1px"></div>
<div class="abs" style="left:1490.5px;top:1007px;width:1.500px;height:10px;background:#444"></div>
<div class="abs" style="left:1523.5px;top:1007px;width:17px;height:14px;border:1.500px solid #444;border-radius:1px"></div>
<div class="abs" style="left:1531.0px;top:1007px;width:1.500px;height:10px;background:#444"></div>
<div class="vsep" style="left:1556px;top:1006px;height:10px;background:#c5cccc"></div>
</body></html>
